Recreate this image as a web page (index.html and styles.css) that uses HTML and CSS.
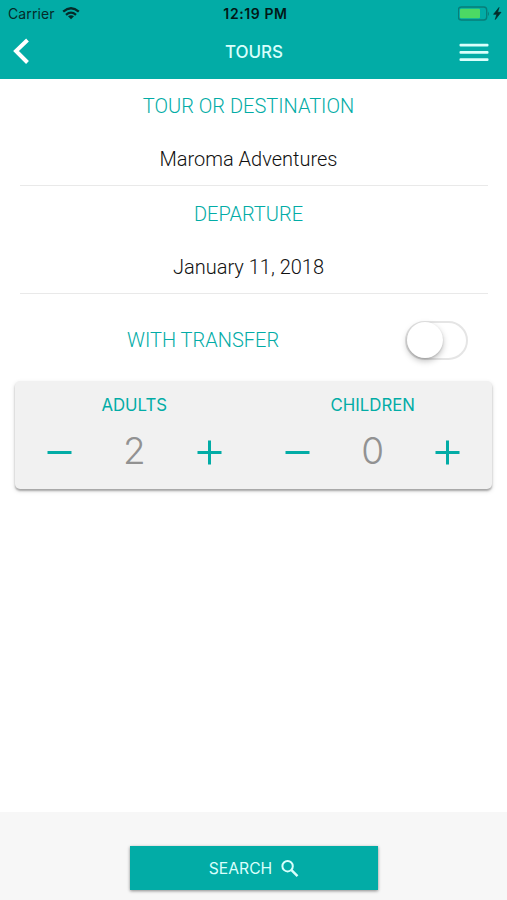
FILE: index.html
```html
<!DOCTYPE html>
<html lang="en">
<head>
<meta charset="utf-8">
<title>Tours</title>
<link rel="stylesheet" href="styles.css">
</head>
<body>
<header class="header">
  <div class="status">
    <div class="carrier"><span>Carrier</span>
      <svg width="18" height="14" viewBox="0 0 18 14" fill="none" stroke="#052b29" stroke-width="2.3"><path d="M1.2 4.700Q9-2.100 16.8 4.700M4 7.800Q9 3.500 14 7.800"/><path d="M9 12.2 6 9.300Q9 7.100 12 9.300Z" fill="#052b29" stroke="none"/></svg>
    </div>
    <span class="time">12:19 PM</span>
    <div class="power">
      <svg width="45" height="16" viewBox="0 0 45 16"><rect x=".3" y="1" width="28.4" height="13" rx="3" fill="none" stroke="#087e79" stroke-width="1.4"/><rect x="2" y="2.700" width="20" height="9.5" rx="1" fill="#4cd964"/><path d="M30 5.500q2 2.3 0 4.6z" fill="#087e79"/><path d="M41 1.500 35.600 8.300h3.200L37.300 13.500 43 6.300h-3.400z" fill="#052b29" stroke="#052b29" stroke-width=".7"/></svg>
    </div>
  </div>
  <nav class="nav">
    <svg class="back" width="18" height="28" viewBox="0 0 18 28" fill="none" stroke="#fff" stroke-width="4"><path d="M14.500 2 3 13l11.500 11.500"/></svg>
    <h1 class="title">TOURS</h1>
    <svg class="menu" width="30" height="20" viewBox="0 0 30 20" fill="#d9fffc"><rect x=".5" y="1.800" width="29" height="2.800" rx="1"/><rect x=".5" y="9" width="29" height="2.800" rx="1"/><rect x=".5" y="16.300" width="29" height="2.800" rx="1"/></svg>
  </nav>
</header>
<main class="main">
  <section class="field first"><h2 class="label">TOUR OR DESTINATION</h2><p class="value">Maroma Adventures</p></section>
  <section class="field second"><h2 class="label">DEPARTURE</h2><p class="value">January 11, 2018</p></section>
  <div class="transfer"><span class="label">WITH TRANSFER</span><div class="switch"><div class="knob"></div></div></div>
  <section class="card">
    <div class="counter"><h3 class="who">ADULTS</h3>
      <div class="stepper"><svg width="25" height="26" viewBox="0 0 25 26" stroke="#02aca6" stroke-width="3"><path d="M.5 13.500h24"/></svg><span class="count">2</span><svg width="25" height="26" viewBox="0 0 25 26" stroke="#02aca6" stroke-width="3"><path d="M.5 13.500h24M12.500 1.500v24"/></svg></div>
    </div>
    <div class="counter"><h3 class="who">CHILDREN</h3>
      <div class="stepper"><svg width="25" height="26" viewBox="0 0 25 26" stroke="#02aca6" stroke-width="3"><path d="M.5 13.500h24"/></svg><span class="count">0</span><svg width="25" height="26" viewBox="0 0 25 26" stroke="#02aca6" stroke-width="3"><path d="M.5 13.500h24M12.500 1.500v24"/></svg></div>
    </div>
  </section>
</main>
<footer class="footer">
  <div class="search"><span>SEARCH</span><svg width="18" height="18" viewBox="0 0 18 18" fill="none" stroke="#d9fffc"><circle cx="6.600" cy="6.200" r="5.200" stroke-width="2"/><path d="m10.500 10.100 6 6" stroke-width="2.500"/></svg></div>
</footer>
</body>
</html>
```
FILE: styles.css
```css
* { box-sizing: border-box; margin: 0; padding: 0; }
body { width: 507px; height: 900px; display: flex; flex-direction: column; background: #fff; font-family: Roboto, "Liberation Sans", sans-serif; overflow: hidden; }
svg { display: block; flex: none; }
.header { height: 79px; flex: none; background: #02aca6; }
.status { height: 27px; display: grid; grid-template-columns: 1fr auto 1fr; align-items: center; padding: 0 4px 0 8px; font-family: Inter, sans-serif; font-size: 14px; color: #052b29; }
.carrier { display: flex; align-items: center; gap: 7px; letter-spacing: .1px; }
.time { font-weight: 600; letter-spacing: .6px; color: #021817; }
.power { display: flex; justify-content: flex-end; }
.nav { height: 50px; display: grid; grid-template-columns: 100px 1fr 100px; align-items: center; padding: 0 18px 0 13px; }
.menu { justify-self: end; }
.title { padding-left: 6px; font-family: Inter, sans-serif; font-size: 17px; font-weight: 500; color: #d9fffc; text-align: center; }
.main { flex: 1; }
.field { margin: 0 19px 0 20px; padding-right: 11px; border-bottom: 1px solid #e9e9e9; text-align: center; }
.first { height: 107px; padding-top: 14px; }
.second { height: 108px; padding-top: 15px; }
.label { font-size: 20px; line-height: 26px; font-weight: 300; color: #02aca6; white-space: nowrap; }
.value { margin-top: 27px; font-size: 20px; line-height: 26px; font-weight: 300; color: #111; }
.transfer { height: 87px; padding: 4px 39px 0 127px; display: flex; align-items: center; justify-content: space-between; }
.switch { width: 63px; height: 39px; margin-top: 1px; border: 2px solid #e5e5e5; border-radius: 20px; }
.knob { width: 36px; height: 36px; margin: -1px 0 0 0; border-radius: 50%; background: #fff; box-shadow: 0 3px 6px rgba(0,0,0,.25), 0 1px 2px rgba(0,0,0,.14); }
.card { height: 108px; margin: 0 15px 0 15px; display: grid; grid-template-columns: 1fr 1fr; border-radius: 5px; background: #f1f1f1; box-shadow: 0 2px 2px rgba(0,0,0,.28), 0 2px 5px rgba(0,0,0,.14); }
.who { margin-top: 13px; font-family: Inter, sans-serif; font-size: 16.8px; line-height: 22px; font-weight: 400; text-align: center; color: #02aca6; }
.stepper { height: 50px; margin-top: 11px; padding: 0 31.500px; display: flex; align-items: center; justify-content: space-between; }
.count { margin-top: -3px; font-family: Inter, sans-serif; font-size: 37px; line-height: 44px; font-weight: 300; color: #929292; }
.footer { height: 88px; padding-top: 34px; background: #f7f7f7; }
.search { width: 248px; height: 44px; margin-left: 130px; display: flex; align-items: center; justify-content: center; gap: 9px; background: #02aca6; box-shadow: 0 1px 3px rgba(0,0,0,.45); font-family: Inter, sans-serif; font-size: 15.7px; padding-top: 1px; color: #d9fffc; }
```
